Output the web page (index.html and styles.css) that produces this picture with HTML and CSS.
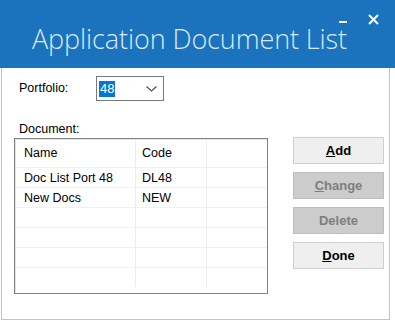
FILE: index.html
```html
<!DOCTYPE html>
<html>
<head>
<meta charset="utf-8">
<link rel="stylesheet" href="styles.css">
</head>
<body>
<div class="titlebar">
  <div class="title">Application Document List</div>
  <span class="min"></span>
  <svg class="close" width="11" height="11" viewBox="0 0 11 11"><path d="M1 1L10 10M10 1L1 10" stroke="#fff" stroke-width="2"/></svg>
</div>
<div class="content">
  <div class="row1">
    <span class="lbl">Portfolio:</span>
    <div class="combo">
      <span class="sel">48</span>
      <svg class="chev" width="11" height="6" viewBox="0 0 11 6"><path d="M0.5 0.5L5.5 5L10.5 0.5" fill="none" stroke="#505050" stroke-width="1.2"/></svg>
    </div>
  </div>
  <div class="lbl doc">Document:</div>
  <div class="main">
    <div class="list">
      <div class="hdr">
        <div class="c1">Name</div><div class="c2">Code</div><div class="c3"></div>
      </div>
      <div class="r"><div class="c1">Doc List Port 48</div><div class="c2">DL48</div><div class="c3"></div></div>
      <div class="r"><div class="c1">New Docs</div><div class="c2">NEW</div><div class="c3"></div></div>
      <div class="r"><div class="c1"></div><div class="c2"></div><div class="c3"></div></div>
      <div class="r"><div class="c1"></div><div class="c2"></div><div class="c3"></div></div>
      <div class="r"><div class="c1"></div><div class="c2"></div><div class="c3"></div></div>
      <div class="r"><div class="c1"></div><div class="c2"></div><div class="c3"></div></div>
    </div>
    <div class="btns">
      <div class="btn"><u>A</u>dd</div>
      <div class="btn dis"><u>C</u>hange</div>
      <div class="btn dis">Delete</div>
      <div class="btn"><u>D</u>one</div>
    </div>
  </div>
</div>
</body>
</html>
```
FILE: styles.css
```css
html, body { margin: 0; padding: 0; background: #fff; }
body { width: 395px; height: 323px; overflow: hidden; font-family: "Liberation Sans", Arial, sans-serif; font-size: 12.5px; color: #000; }
.titlebar { position: relative; height: 68px; background: #1a73bc; }
.title { padding: 20px 0 0 32px; font-family: "Open Sans", "DejaVu Sans", sans-serif; font-weight: 300; font-size: 27px; line-height: 38px; color: #dbe9f6; letter-spacing: -0.1px; }
.min { position: absolute; left: 339px; top: 21px; width: 8px; height: 2px; background: #fff; }
.close { position: absolute; left: 368px; top: 14px; }
.content { margin-left: 1px; width: 389px; height: 252px; border: 1px solid #c4c4c4; border-top: none; padding: 0 0 0 12px; box-sizing: border-box; display: flex; flex-direction: column; }
.row1 { display: flex; align-items: center; margin-top: 8px; }
.lbl { margin-left: 5px; width: 77px; line-height: 15px; }
.combo { width: 68px; height: 25px; border: 1px solid #7a7a7a; box-sizing: border-box; display: flex; align-items: center; justify-content: space-between; padding: 0 6px 0 2px; }
.sel { background: #0078d7; color: #fff; padding: 0 1px; line-height: 16px; font-size: 13px; }
.chev { margin-top: 1px; }
.doc { margin-top: 21px; margin-bottom: 0; }
.main { display: flex; align-items: flex-start; gap: 25px; }
.list { width: 254px; height: 156px; box-sizing: border-box; border: 1px solid #828282; box-shadow: inset 1px 1px 0 #e3e3e3; overflow: hidden; margin-top: 1px; }
.hdr, .r { display: flex; }
.hdr { height: 28px; }
.r { height: 20px; border-top: 1px solid #f0f0f0; box-sizing: border-box; }
.hdr .c1, .hdr .c2 { line-height: 29px; }
.r > div { line-height: 20px; }
.c1 { width: 121px; padding-left: 9px; box-sizing: border-box; border-right: 1px solid #ececec; }
.c2 { width: 71px; padding-left: 6px; box-sizing: border-box; border-right: 1px solid #ececec; }
.c3 { flex: 1; }
.btns { display: flex; flex-direction: column; gap: 8px; width: 91px; }
.btn { height: 27px; box-sizing: border-box; border: 1px solid #cfcfcf; background: #efefef; font-weight: bold; font-size: 13px; text-align: center; line-height: 25px; color: #000; }
.btn.dis { background: #cccccc; border-color: #bdbdbd; color: #7e7e7e; }
```
